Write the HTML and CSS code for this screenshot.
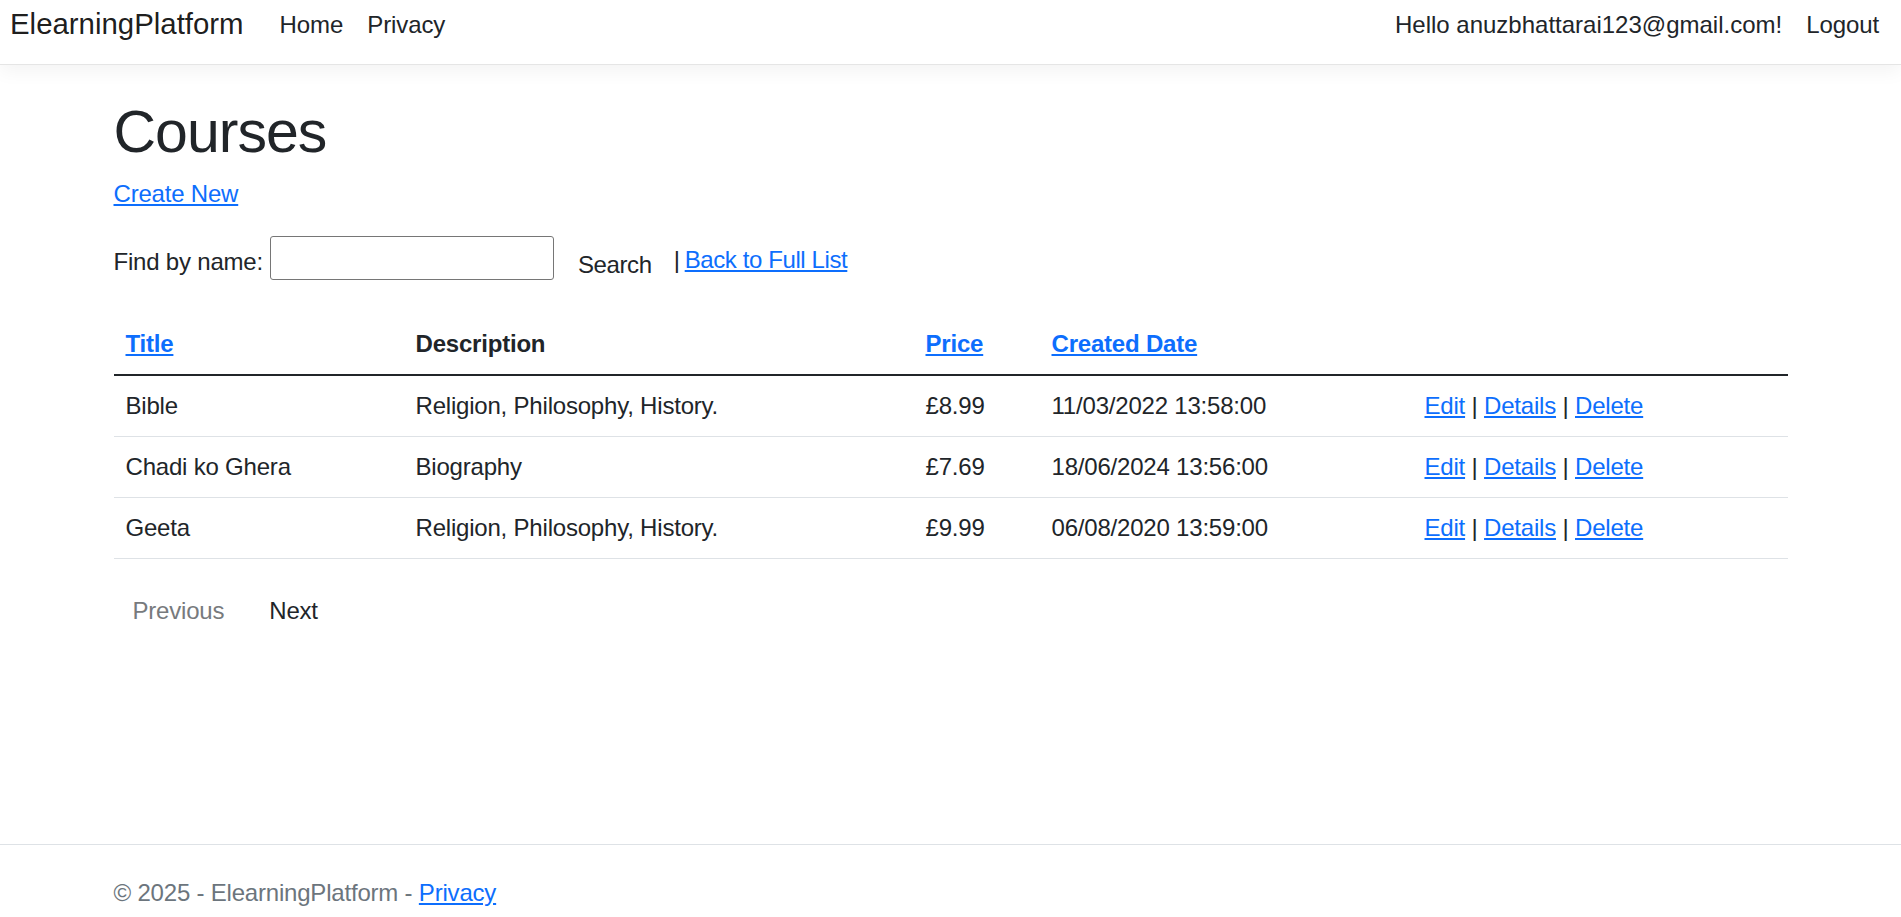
FILE: index.html
```html
<!DOCTYPE html>
<html lang="en">
<head>
<meta charset="utf-8">
<title>Index - ElearningPlatform</title>
<link rel="stylesheet" href="styles.css">
</head>
<body>
<header class="topbar">
  <nav class="navbar">
    <a class="brand" href="#">ElearningPlatform</a>
    <ul class="nav-list">
      <li><a class="nav-link" href="#">Home</a></li>
      <li><a class="nav-link" href="#">Privacy</a></li>
    </ul>
    <ul class="nav-list nav-user">
      <li><a class="nav-link nav-hello" href="#">Hello anuzbhattarai123@gmail.com!</a></li>
      <li><button class="nav-link nav-button" type="button">Logout</button></li>
    </ul>
  </nav>
</header>

<div class="container">
  <main class="main">
    <h1 class="page-title">Courses</h1>
    <p class="create"><a class="link" href="#">Create New</a></p>

    <form class="search" action="#">
      <label class="search-label" for="q">Find by name:</label>
      <input class="search-input" id="q" type="text">
      <button class="search-btn" type="button">Search</button>
      <span class="search-sep">|</span>
      <a class="link search-back" href="#">Back to Full List</a>
    </form>

    <table class="courses">
      <colgroup>
        <col class="col-title">
        <col class="col-desc">
        <col class="col-price">
        <col class="col-date">
        <col class="col-actions">
      </colgroup>
      <thead>
        <tr>
          <th><a class="link" href="#">Title</a></th>
          <th>Description</th>
          <th><a class="link" href="#">Price</a></th>
          <th><a class="link" href="#">Created Date</a></th>
          <th></th>
        </tr>
      </thead>
      <tbody>
        <tr>
          <td>Bible</td>
          <td>Religion, Philosophy, History.</td>
          <td>£8.99</td>
          <td>11/03/2022 13:58:00</td>
          <td><a class="link" href="#">Edit</a> | <a class="link" href="#">Details</a> | <a class="link" href="#">Delete</a></td>
        </tr>
        <tr>
          <td>Chadi ko Ghera</td>
          <td>Biography</td>
          <td>£7.69</td>
          <td>18/06/2024 13:56:00</td>
          <td><a class="link" href="#">Edit</a> | <a class="link" href="#">Details</a> | <a class="link" href="#">Delete</a></td>
        </tr>
        <tr>
          <td>Geeta</td>
          <td>Religion, Philosophy, History.</td>
          <td>£9.99</td>
          <td>06/08/2020 13:59:00</td>
          <td><a class="link" href="#">Edit</a> | <a class="link" href="#">Details</a> | <a class="link" href="#">Delete</a></td>
        </tr>
      </tbody>
    </table>

    <div class="pager">
      <a class="pager-btn is-disabled" href="#">Previous</a>
      <a class="pager-btn" href="#">Next</a>
    </div>
  </main>
</div>

<footer class="footer">
  <div class="container">&copy; 2025 - ElearningPlatform - <a class="link" href="#">Privacy</a></div>
</footer>
</body>
</html>
```

FILE: styles.css
```css
html, body {
  margin: 0;
  padding: 0;
}

body {
  font-family: "Liberation Sans", Arial, sans-serif;
  font-size: 24px;
  line-height: 36px;
  letter-spacing: -0.2px;
  color: #212529;
  background: #fff;
  min-height: 100vh;
  display: flex;
  flex-direction: column;
  overflow: hidden;
}

/* ---------- top navigation ---------- */
.topbar {
  height: 64px;
  border-bottom: 1px solid #e5e5e5;
  box-shadow: 0 6px 18px rgba(0, 0, 0, 0.05);
  background: #fff;
  flex: none;
}

.navbar {
  display: flex;
  align-items: flex-start;
  height: 64px;
  padding: 0 10px;
}

.brand {
  font-size: 29.4px;
  line-height: 45px;
  letter-spacing: 0;
  margin-top: 1px;
  margin-right: 24px;
  color: rgba(0, 0, 0, 0.9);
  text-decoration: none;
  white-space: nowrap;
}

.nav-list {
  list-style: none;
  margin: 0;
  padding: 0;
  display: flex;
}

.nav-user {
  margin-left: auto;
}

.nav-link {
  display: block;
  padding: 7px 12px 0;
  font-size: 24px;
  line-height: 36px;
  letter-spacing: -0.1px;
  color: #212529;
  text-decoration: none;
  white-space: nowrap;
}

.nav-hello {
  letter-spacing: 0;
}

.nav-button {
  background: none;
  border: 0;
  font-family: inherit;
  cursor: pointer;
}

/* ---------- main content ---------- */
.container {
  width: 1674px;
  margin: 0 auto;
}

.main {
  padding-bottom: 24px;
}

.link {
  color: #0d6efd;
  text-decoration: underline;
}

.page-title {
  font-size: 59px;
  line-height: 72px;
  font-weight: 500;
  margin: 31px 0 8px;
  letter-spacing: -1px;
}

.create {
  margin: 0 0 24px;
}

.search {
  display: flex;
  align-items: flex-start;
  height: 44px;
  margin: 0;
}

.search-label {
  margin-top: 8px;
  white-space: nowrap;
}

.search-input {
  box-sizing: border-box;
  width: 284px;
  height: 44px;
  margin-left: 7px;
  border: 1px solid #767676;
  border-radius: 3px;
  padding: 1px 4px;
  font: inherit;
  background: #fff;
}

.search-btn {
  margin: 11px 0 0 6px;
  padding: 0 18px;
  border: 0;
  background: none;
  font: inherit;
  letter-spacing: -0.4px;
  line-height: 36px;
  color: #212529;
  cursor: pointer;
}

.search-sep {
  margin: 6px 0 0 4px;
}

.search-back {
  margin: 6px 0 0 5px;
  letter-spacing: -0.4px;
}

/* ---------- table ---------- */
.courses {
  width: 100%;
  border-collapse: collapse;
  table-layout: fixed;
  margin: 34px 0 24px;
}

.col-title { width: 290px; }
.col-desc { width: 510px; }
.col-price { width: 126px; }
.col-date { width: 373px; }
.col-actions { width: 375px; }

.courses th,
.courses td {
  padding: 12px;
  text-align: left;
  vertical-align: top;
  line-height: 36px;
  white-space: nowrap;
}

.courses th {
  font-weight: 700;
  border-bottom: 2px solid #212529;
}

.courses td {
  border-bottom: 1px solid #dee2e6;
}

/* ---------- pager ---------- */
.pager {
  display: flex;
  gap: 7px;
}

.pager-btn {
  display: inline-block;
  padding: 9px 18px;
  border: 1px solid transparent;
  line-height: 36px;
  color: #212529;
  text-decoration: none;
}

.pager-btn.is-disabled {
  color: #777a7d;
}

/* ---------- footer ---------- */
.footer {
  margin-top: auto;
  flex: none;
  border-top: 1px solid #dee2e6;
  padding-top: 30px;
  box-sizing: border-box;
  height: 73px;
  color: #6c757d;
  white-space: nowrap;
  overflow: hidden;
}
```
